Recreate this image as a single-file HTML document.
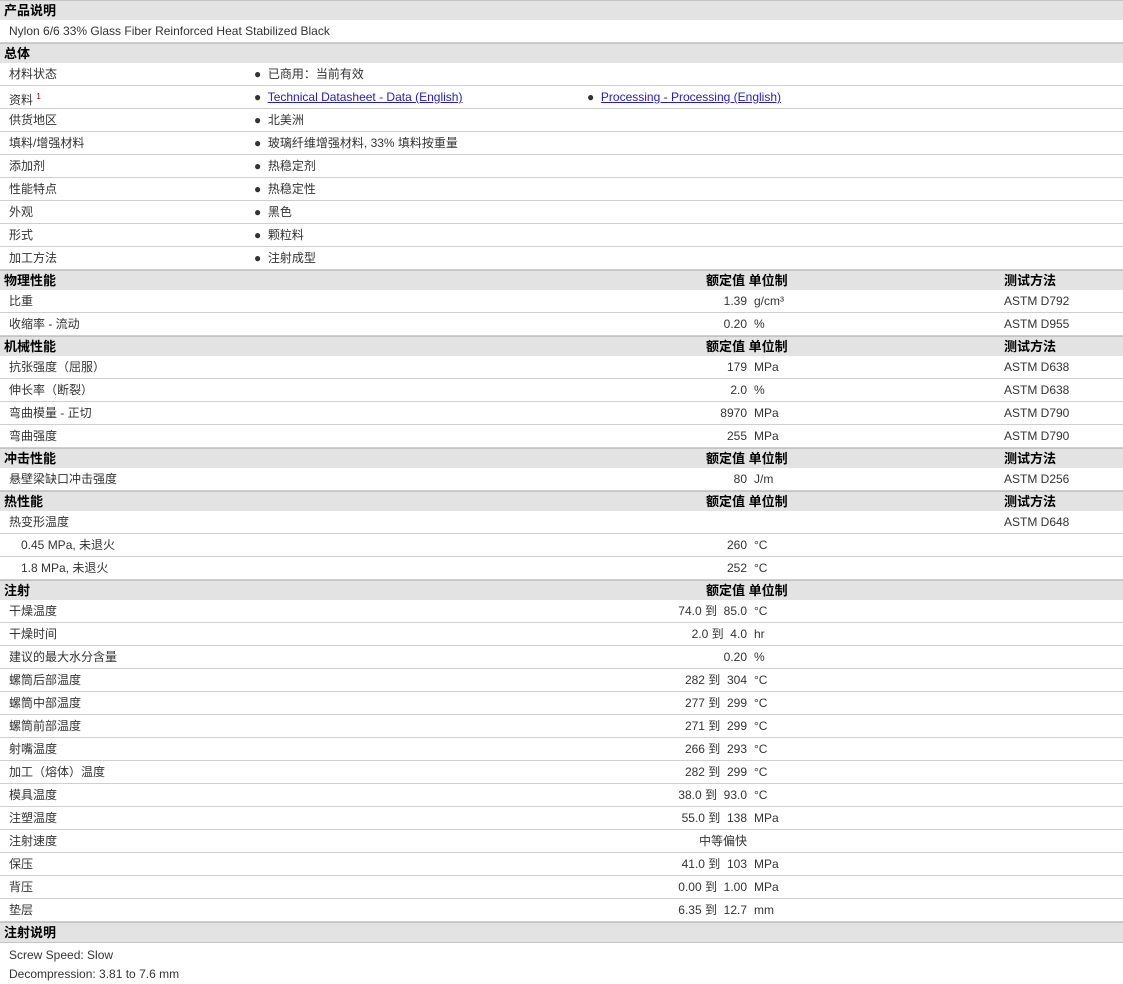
<!DOCTYPE html>
<html><head><meta charset="utf-8"><style>
body{margin:0;background:#fff;font-family:"Liberation Sans","Noto Sans CJK SC",sans-serif;font-size:12px;color:#333;width:1123px;height:980px;overflow:hidden}
.h{position:relative;height:19px;line-height:19px;background:#e3e3e3;border-top:1px solid #c4c4c4;font-weight:bold;font-size:13px;color:#000}
.r{position:relative;height:22px;line-height:22px;border-bottom:1px solid #cfcfcf}
span{position:absolute;white-space:nowrap}
.l{left:9px}.s{left:21px}
.h .l{left:4px}
.b{left:254px}.b2{left:587px}
.v{right:376px;text-align:right}
.u{left:754px}
.t{left:1004px}
.hv{left:706px}
a{color:#2222bb;text-decoration:underline}
.p{padding-left:9px;height:19px;line-height:19px}
</style></head><body>
<div class="h"><span class="l">产品说明</span></div>
<div class="r"><span class="l">Nylon 6/6 33% Glass Fiber Reinforced Heat Stabilized Black</span></div>
<div class="h"><span class="l">总体</span></div>
<div class="r"><span class="l">材料状态</span><span class="b">●&nbsp; 已商用：当前有效</span></div>
<div class="r"><span class="l">资料 <sup style="font-size:8px;color:#800">1</sup></span><span class="b">●&nbsp; <a>Technical Datasheet - Data (English)</a></span><span class="b2">●&nbsp; <a>Processing - Processing (English)</a></span></div>
<div class="r"><span class="l">供货地区</span><span class="b">●&nbsp; 北美洲</span></div>
<div class="r"><span class="l">填料/增强材料</span><span class="b">●&nbsp; 玻璃纤维增强材料, 33% 填料按重量</span></div>
<div class="r"><span class="l">添加剂</span><span class="b">●&nbsp; 热稳定剂</span></div>
<div class="r"><span class="l">性能特点</span><span class="b">●&nbsp; 热稳定性</span></div>
<div class="r"><span class="l">外观</span><span class="b">●&nbsp; 黑色</span></div>
<div class="r"><span class="l">形式</span><span class="b">●&nbsp; 颗粒料</span></div>
<div class="r"><span class="l">加工方法</span><span class="b">●&nbsp; 注射成型</span></div>
<div class="h"><span class="l">物理性能</span><span class="hv">额定值 单位制</span><span class="t">测试方法</span></div>
<div class="r"><span class="l">比重</span><span class="v">1.39</span><span class="u">g/cm³</span><span class="t">ASTM D792</span></div>
<div class="r"><span class="l">收缩率 - 流动</span><span class="v">0.20</span><span class="u">%</span><span class="t">ASTM D955</span></div>
<div class="h"><span class="l">机械性能</span><span class="hv">额定值 单位制</span><span class="t">测试方法</span></div>
<div class="r"><span class="l">抗张强度（屈服）</span><span class="v">179</span><span class="u">MPa</span><span class="t">ASTM D638</span></div>
<div class="r"><span class="l">伸长率（断裂）</span><span class="v">2.0</span><span class="u">%</span><span class="t">ASTM D638</span></div>
<div class="r"><span class="l">弯曲模量 - 正切</span><span class="v">8970</span><span class="u">MPa</span><span class="t">ASTM D790</span></div>
<div class="r"><span class="l">弯曲强度</span><span class="v">255</span><span class="u">MPa</span><span class="t">ASTM D790</span></div>
<div class="h"><span class="l">冲击性能</span><span class="hv">额定值 单位制</span><span class="t">测试方法</span></div>
<div class="r"><span class="l">悬壁梁缺口冲击强度</span><span class="v">80</span><span class="u">J/m</span><span class="t">ASTM D256</span></div>
<div class="h"><span class="l">热性能</span><span class="hv">额定值 单位制</span><span class="t">测试方法</span></div>
<div class="r"><span class="l">热变形温度</span><span class="t">ASTM D648</span></div>
<div class="r"><span class="s">0.45 MPa, 未退火</span><span class="v">260</span><span class="u">°C</span></div>
<div class="r"><span class="s">1.8 MPa, 未退火</span><span class="v">252</span><span class="u">°C</span></div>
<div class="h"><span class="l">注射</span><span class="hv">额定值 单位制</span></div>
<div class="r"><span class="l">干燥温度</span><span class="v">74.0 到&nbsp; 85.0</span><span class="u">°C</span></div>
<div class="r"><span class="l">干燥时间</span><span class="v">2.0 到&nbsp; 4.0</span><span class="u">hr</span></div>
<div class="r"><span class="l">建议的最大水分含量</span><span class="v">0.20</span><span class="u">%</span></div>
<div class="r"><span class="l">螺筒后部温度</span><span class="v">282 到&nbsp; 304</span><span class="u">°C</span></div>
<div class="r"><span class="l">螺筒中部温度</span><span class="v">277 到&nbsp; 299</span><span class="u">°C</span></div>
<div class="r"><span class="l">螺筒前部温度</span><span class="v">271 到&nbsp; 299</span><span class="u">°C</span></div>
<div class="r"><span class="l">射嘴温度</span><span class="v">266 到&nbsp; 293</span><span class="u">°C</span></div>
<div class="r"><span class="l">加工（熔体）温度</span><span class="v">282 到&nbsp; 299</span><span class="u">°C</span></div>
<div class="r"><span class="l">模具温度</span><span class="v">38.0 到&nbsp; 93.0</span><span class="u">°C</span></div>
<div class="r"><span class="l">注塑温度</span><span class="v">55.0 到&nbsp; 138</span><span class="u">MPa</span></div>
<div class="r"><span class="l">注射速度</span><span class="v">中等偏快</span></div>
<div class="r"><span class="l">保压</span><span class="v">41.0 到&nbsp; 103</span><span class="u">MPa</span></div>
<div class="r"><span class="l">背压</span><span class="v">0.00 到&nbsp; 1.00</span><span class="u">MPa</span></div>
<div class="r"><span class="l">垫层</span><span class="v">6.35 到&nbsp; 12.7</span><span class="u">mm</span></div>
<div class="h" style="border-bottom:1px solid #c4c4c4"><span class="l">注射说明</span></div>
<div class="p" style="margin-top:3px">Screw Speed: Slow</div>
<div class="p">Decompression: 3.81 to 7.6 mm</div>
</body></html>
